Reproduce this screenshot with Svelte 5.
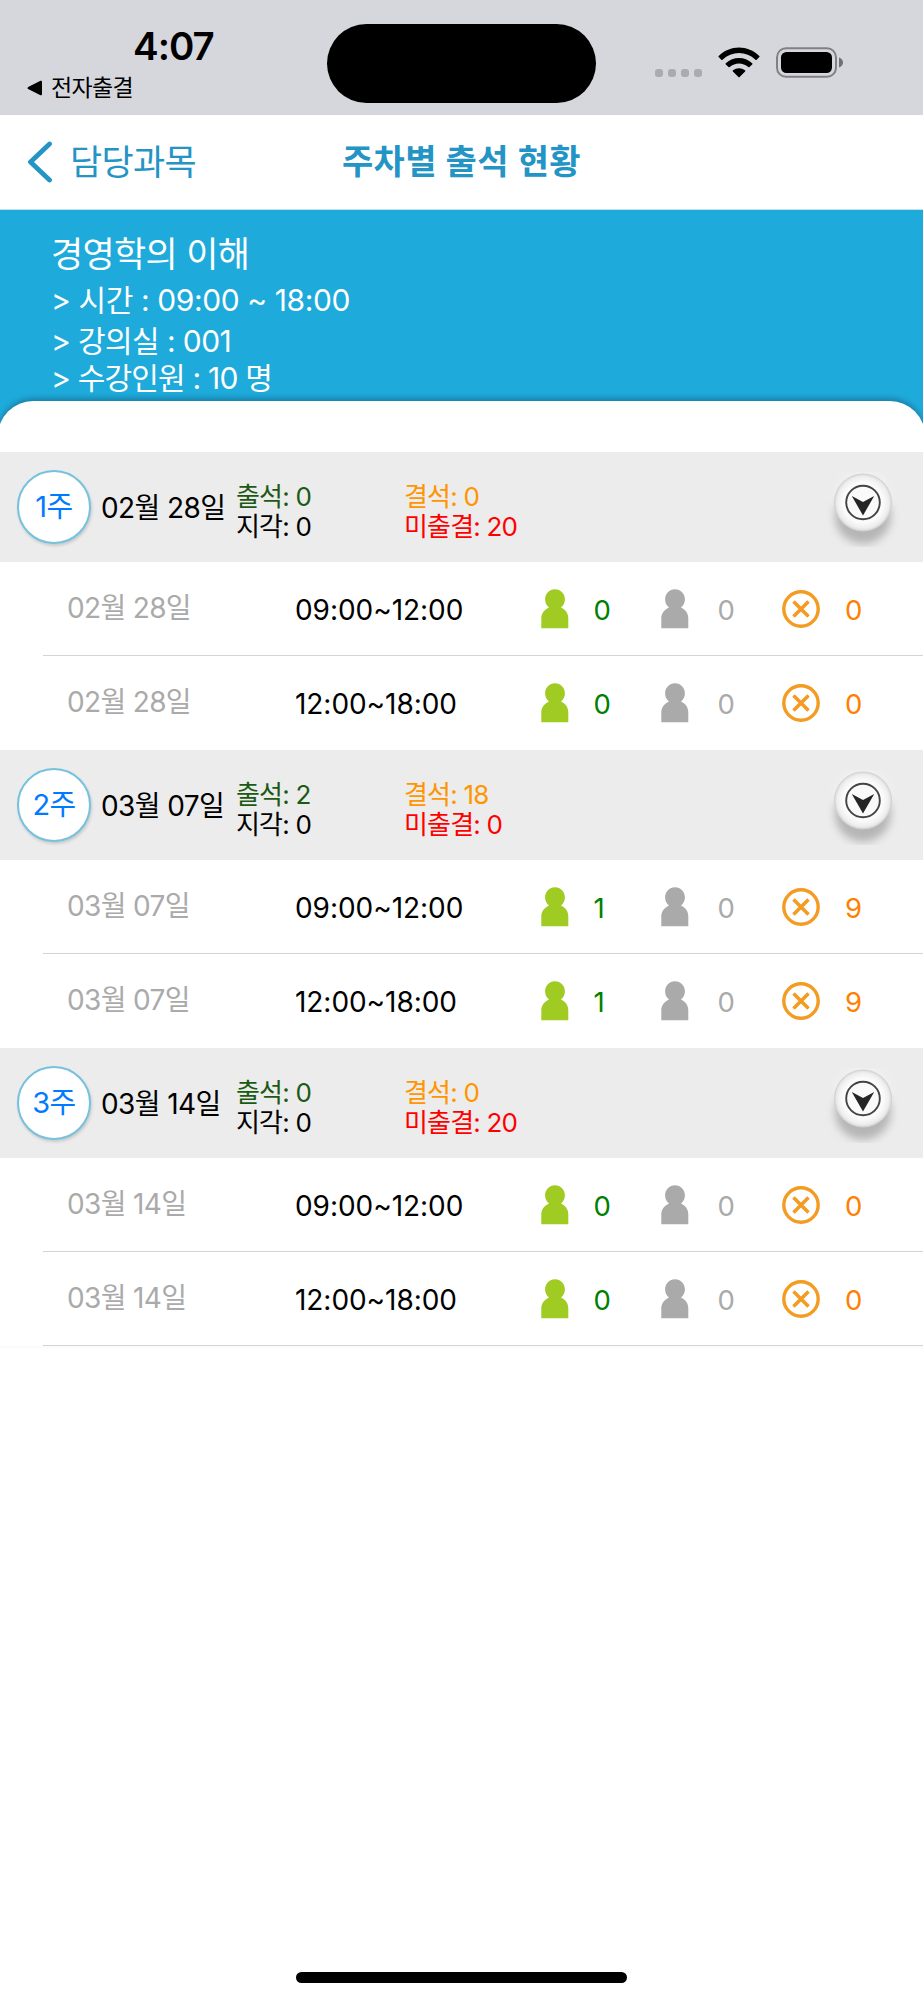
<script>
  const weeks = [
    { week: '1주', date: '02월 28일', present: 0, late: 0, absent: 0, missing: 20,
      slots: [{ time: '09:00~12:00', a: 0, b: 0, c: 0 }, { time: '12:00~18:00', a: 0, b: 0, c: 0 }] },
    { week: '2주', date: '03월 07일', present: 2, late: 0, absent: 18, missing: 0,
      slots: [{ time: '09:00~12:00', a: 1, b: 0, c: 9 }, { time: '12:00~18:00', a: 1, b: 0, c: 9 }] },
    { week: '3주', date: '03월 14일', present: 0, late: 0, absent: 0, missing: 20,
      slots: [{ time: '09:00~12:00', a: 0, b: 0, c: 0 }, { time: '12:00~18:00', a: 0, b: 0, c: 0 }] }
  ];
</script>

{#snippet person(color)}
  <svg class="person" viewBox="0 0 28 40" width="28" height="40">
    <path fill={color} d="M14 .3c5.700 0 9.900 4.500 9.900 9.900 0 3.400-1.200 6-3.900 8.200 4.900 2.200 7.300 6.100 7.300 11.100V39.300H.3V29.500c0-5 2.800-8.900 7.700-11.100-2.700-2.200-3.900-4.800-3.900-8.200C4.100 4.800 8.300.3 14 .3z" />
  </svg>
{/snippet}

<div class="screen">
  <header class="status">
    <div class="left">
      <div class="clock">4:07</div>
      <div class="return">
        <svg width="16" height="16" viewBox="0 0 16 16"><path d="M1.600 6.700 13 .9c1.200-.6 2 0 2 1v12.200c0 1-.8 1.600-2 1L1.600 9.300c-1.500-.8-1.500-1.800 0-2.600z" /></svg>
        <span>전자출결</span>
      </div>
    </div>
    <div class="island"></div>
    <div class="indicators">
      <span class="dots"><i></i><i></i><i></i><i></i></span>
      <svg class="wifi" width="42" height="31" viewBox="0 0 42 31">
        <path d="M.7 9C12-2.400 30-2.400 41.300 9c.4.400.4.700 0 1.100l-2.600 2.600c-.4.400-.8.400-1.200 0-9.200-8.800-23.800-8.800-33 0-.4.400-.8.400-1.200 0L.7 10.100C.3 9.700.3 9.400.7 9z" />
        <path d="M7.800 16.200c7.400-7.100 19-7.100 26.400 0 .4.400.4.800 0 1.200l-2.700 2.600c-.4.400-.8.400-1.200 0-5.300-4.800-13.300-4.800-18.600 0-.4.400-.8.400-1.200 0l-2.700-2.600c-.4-.4-.4-.8 0-1.200z" />
        <path d="M15 23.300c3.400-2.900 8.600-2.900 12 0 .5.400.5.800.1 1.200l-5.500 5.500c-.4.400-.8.400-1.200 0l-5.500-5.500c-.4-.4-.4-.8.1-1.200z" />
      </svg>
      <svg class="battery" width="68" height="31" viewBox="0 0 68 31">
        <rect x="1" y="1.200" width="59" height="28.600" rx="9" fill="none" stroke="#808085" stroke-width="2" />
        <rect x="5" y="5" width="51" height="21" rx="5.500" />
        <path fill="#707074" d="M63 10.500c2.400.8 4 2.700 4 5s-1.600 4.200-4 5z" />
      </svg>
    </div>
  </header>

  <nav>
    <div class="back">
      <svg width="26" height="42" viewBox="0 0 26 42"><path d="M22.500 3 3.500 21l19 18" fill="none" stroke="#2494c5" stroke-width="4.800" stroke-linecap="round" stroke-linejoin="round" /></svg>
      <span>담당과목</span>
    </div>
    <h1>주차별 출석 현황</h1>
  </nav>

  <section class="course">
    <h2>경영학의 이해</h2>
    <p class="hours">&gt; 시간 : 09:00 ~ 18:00</p>
    <p class="room">&gt; 강의실 : 001</p>
    <p>&gt; 수강인원 : 10 명</p>
  </section>

  <main>
    {#each weeks as w}
      <div class="week">
        <div class="badge"><span>{w.week}</span></div>
        <div class="date">{w.date}</div>
        <div class="stats">
          <div class="green">출석: {w.present}</div>
          <div>지각: {w.late}</div>
        </div>
        <div class="stats">
          <div class="orange">결석: {w.absent}</div>
          <div class="red">미출결: {w.missing}</div>
        </div>
        <svg class="toggle" width="80" height="80" viewBox="0 0 80 80">
          <defs>
            <radialGradient id="face"><stop offset="0" stop-color="#fff" /><stop offset=".7" stop-color="#fbfbfb" /><stop offset=".9" stop-color="#eee" /><stop offset="1" stop-color="#dadada" /></radialGradient>
            <filter id="soft" x="-30%" y="-30%" width="160%" height="160%"><feGaussianBlur stdDeviation="4" /></filter>
            <clipPath id="cut"><rect width="80" height="75" /></clipPath>
          </defs>
          <g clip-path="url(#cut)">
            <circle cx="40" cy="27" r="29" fill="#f1f1f1" filter="url(#soft)" />
            <circle cx="40" cy="44" r="28" fill="#b5b5b5" filter="url(#soft)" />
            <circle cx="40" cy="30.500" r="28.500" fill="url(#face)" stroke="#d2d2d2" />
            <circle cx="40" cy="30.500" r="16.800" fill="#fafafa" stroke="#444" stroke-width="1.900" />
            <path d="M28.800 24 40 30l11.200-6L40 43.500z" fill="#252525" />
          </g>
        </svg>
      </div>
      {#each w.slots as s}
        <div class="slot">
          <div class="day">{w.date}</div>
          <div class="time">{s.time}</div>
          {@render person('#9fcb22')}
          <div class="num n1">{s.a}</div>
          {@render person('#aaaaaa')}
          <div class="num n2">{s.b}</div>
          <svg class="cross" width="38" height="38" viewBox="0 0 38 38" fill="none" stroke="#f49b22"><circle cx="19" cy="19" r="17.200" stroke-width="3.400" /><path d="m11.500 11.500 15 15m0-15-15 15" stroke-width="3.600" /></svg>
          <div class="num n3">{s.c}</div>
        </div>
      {/each}
    {/each}
  </main>
  <div class="home"></div>
</div>

<style>
  .screen { width: 923px; height: 2000px; overflow: hidden; display: flex; flex-direction: column; background: #fff; color: #000; font-family: Inter, "Noto Sans CJK KR", sans-serif; font-size: 28px; line-height: 30px; white-space: nowrap; }
  p, h1, h2 { margin: 0; font-weight: 400; }
  .status { height: 115px; flex: none; background: #d6d7dc; display: grid; grid-template-columns: 327px 269px 1fr; align-items: start; }
  .clock { margin: 26px 0 0 133px; font-size: 38.500px; font-weight: 600; line-height: 40px; letter-spacing: -1px; }
  .return { display: flex; align-items: center; gap: 8px; margin: 7px 0 0 27px; font-size: 23px; letter-spacing: -.7px; }
  .island { height: 79px; margin-top: 24px; border-radius: 40px; background: #000; }
  .indicators { display: flex; padding: 47px 0 0 59px; }
  .dots { display: flex; gap: 5px; margin-top: 22px; }
  .dots i { width: 8px; height: 8px; border-radius: 3px; background: #aaabaf; }
  .wifi { margin-left: 16px; }
  .battery { margin-left: 16px; }
  nav { height: 94px; flex: none; display: grid; grid-template-columns: 342px 1fr; align-items: center; color: #2494c5; border-bottom: 1px solid #c5e1eb; }
  .back { display: flex; align-items: center; gap: 17px; padding-left: 27px; font-size: 35px; letter-spacing: -.7px; }
  h1 { font-size: 34px; font-weight: 600; letter-spacing: .3px; }
  .course { height: 242px; flex: none; box-sizing: border-box; padding: 25px 0 0 51px; background: #1eaada; color: #fff; font-size: 30px; line-height: 36px; letter-spacing: -.8px; }
  h2 { font-size: 35px; line-height: 38px; margin-bottom: 9px; letter-spacing: -.7px; }
  .hours { letter-spacing: -.4px; }
  .room { margin: 5px 0 1px; letter-spacing: -.6px; }
  main { margin: -51px -2px 0; padding: 51px 2px 0; background: #fff; border-radius: 35px 35px 0 0; box-shadow: 0 -3px 5px rgba(20, 70, 100, .4); }
  .week { height: 110px; display: grid; grid-template-columns: 101px 135px 168px 419px 80px; align-items: center; background: #ececec; }
  .badge { width: 70px; height: 70px; margin: -1px 0 0 17px; border: 2px solid #74c2de; border-radius: 50%; background: #fff; display: flex; align-items: center; justify-content: center; color: #007aff; font-size: 29px; letter-spacing: -.6px; box-shadow: 1px 2px 3px rgba(0, 0, 0, .15); }
  .date { margin-top: 1px; letter-spacing: -.6px; }
  .stats { font-size: 26px; padding-top: 9px; letter-spacing: -.8px; }
  .toggle { margin-top: 9px; }
  .green { color: #1c5a14; }
  .orange { color: #ff9500; }
  .red { color: #f00; }
  .slot { height: 93px; margin-left: 43px; display: grid; grid-template-columns: 24px 228px 246px 53px 67px 57px 64px 63px 1fr; align-items: center; border-bottom: 1px solid #d4d4d6; }
  .slot:has(+ .week) { border-bottom-color: #fff; }
  .day { grid-column: 2; color: #aaa; margin-top: -1px; letter-spacing: -.65px; }
  .time { margin-top: 2px; letter-spacing: -.05px; }
  .num { margin-top: 2px; font-size: 27.500px; letter-spacing: -.3px; }
  .n1 { color: #008000; margin-left: -.5px; }
  .n2 { color: #aaa; margin-left: -.5px; }
  .n3 { color: #ff8000; }
  .home { width: 331px; height: 11px; margin: auto auto 17px; border-radius: 6px; background: #000; }
</style>
